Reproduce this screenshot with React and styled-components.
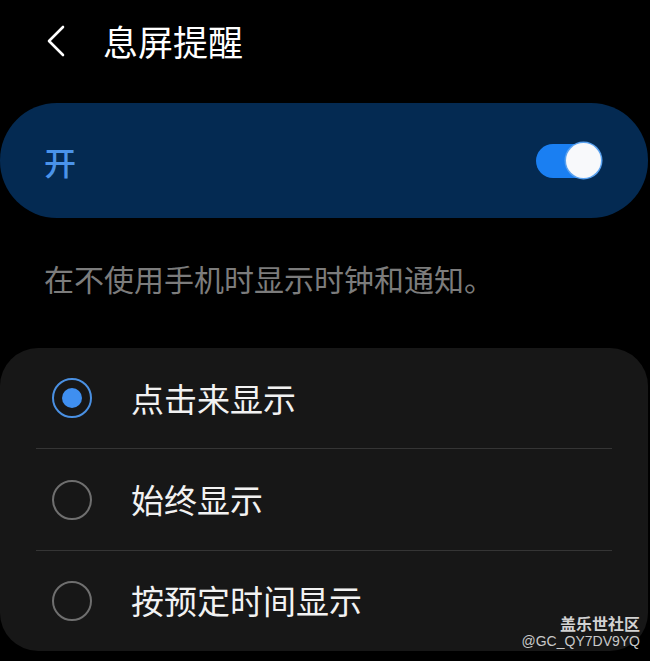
import React from 'react'
import styled, { createGlobalStyle } from 'styled-components'

const GlobalStyle = createGlobalStyle`
  html, body {
    margin: 0;
    padding: 0;
    background: #000;
  }
  body {
    font-family: 'Noto Sans CJK SC', 'Noto Sans', sans-serif;
  }
`

const options = ['点击来显示', '始终显示', '按预定时间显示']

function App() {
    const selected = 0
    return (
        <>
            <GlobalStyle />
            <Screen>
                <Header>
                    <BackButton aria-label="返回">
                        <svg width="22" height="34" viewBox="0 0 22 34" fill="none">
                            <path d="M18 3 L4 17 L18 31" stroke="#fff" strokeWidth="2.6" strokeLinecap="round" strokeLinejoin="round" />
                        </svg>
                    </BackButton>
                    <Title>息屏提醒</Title>
                </Header>

                <MasterSwitch>
                    <SwitchLabel>开</SwitchLabel>
                    <Toggle>
                        <Knob />
                    </Toggle>
                </MasterSwitch>

                <Description>在不使用手机时显示时钟和通知。</Description>

                <OptionCard>
                    {options.map((label, i) => (
                        <React.Fragment key={label}>
                            {i > 0 && <Divider />}
                            <OptionRow>
                                <Radio $checked={i === selected} />
                                <OptionLabel>{label}</OptionLabel>
                            </OptionRow>
                        </React.Fragment>
                    ))}
                </OptionCard>

                <Watermark>
                    <strong>盖乐世社区</strong>
                    <span>@GC_QY7DV9YQ</span>
                </Watermark>
            </Screen>
        </>
    )
}

export default App

const Screen = styled.div`
    position: relative;
    width: 650px;
    height: 661px;
    overflow: hidden;
    background: #000;
`

const Header = styled.div`
    display: flex;
    align-items: center;
    height: 82px;
    padding-left: 45px;
`

const BackButton = styled.div`
    display: flex;
    align-items: center;
    width: 22px;
    height: 34px;
    margin-right: 36px;
`

const Title = styled.h1`
    margin: 0;
    font-size: 35px;
    font-weight: 400;
    color: #fff;
    line-height: 1;
    padding-bottom: 2px;
`

const MasterSwitch = styled.div`
    display: flex;
    align-items: center;
    justify-content: space-between;
    width: 648px;
    height: 115px;
    margin-top: 21px;
    padding: 0 48px 0 44px;
    box-sizing: border-box;
    border-radius: 57px;
    background: #042a52;
`

const SwitchLabel = styled.span`
    font-size: 32px;
    font-weight: 500;
    color: #4a93ea;
    line-height: 1;
`

const Toggle = styled.div`
    display: flex;
    align-items: center;
    justify-content: flex-end;
    width: 64px;
    height: 34px;
    border-radius: 17px;
    background: #1a7ff2;
`

const Knob = styled.div`
    width: 35px;
    height: 35px;
    margin-right: -1px;
    border-radius: 50%;
    background: #f8f9fb;
    box-shadow: 0 0 0 1.5px #5aa2f0;
`

const Description = styled.p`
    margin: 0;
    padding: 40px 0 0 44px;
    height: 90px;
    line-height: 40px;
    font-size: 30px;
    color: #7c7c7c;
`

const OptionCard = styled.div`
    width: 648px;
    height: 303px;
    border-radius: 38px;
    background: #171717;
    display: flex;
    flex-direction: column;
`

const OptionRow = styled.div`
    display: flex;
    align-items: center;
    height: 101px;
    padding-left: 52px;
    gap: 39px;
`

const Divider = styled.div`
    height: 1px;
    margin: 0 36px;
    background: #353535;
`

const Radio = styled.span`
    position: relative;
    width: 40px;
    height: 40px;
    box-sizing: border-box;
    border-radius: 50%;
    border: 2px solid ${p => (p.$checked ? '#4a90e2' : '#6f6f6f')};

    &::after {
        content: '';
        display: ${p => (p.$checked ? 'block' : 'none')};
        position: absolute;
        left: 8px;
        top: 8px;
        width: 20px;
        height: 20px;
        border-radius: 50%;
        background: #3f8ff0;
    }
`

const OptionLabel = styled.span`
    font-size: 33px;
    color: #f2f2f2;
    line-height: 1;
`

const Watermark = styled.div`
    position: absolute;
    right: 10px;
    bottom: 13px;
    display: flex;
    flex-direction: column;
    align-items: flex-end;
    gap: 3px;
    color: #c9c9c9;
    line-height: 1;

    strong {
        font-size: 16px;
        font-weight: 700;
        color: #d2d2d2;
    }

    span {
        font-family: 'Liberation Sans', Arial, sans-serif;
        font-size: 14px;
    }
`
